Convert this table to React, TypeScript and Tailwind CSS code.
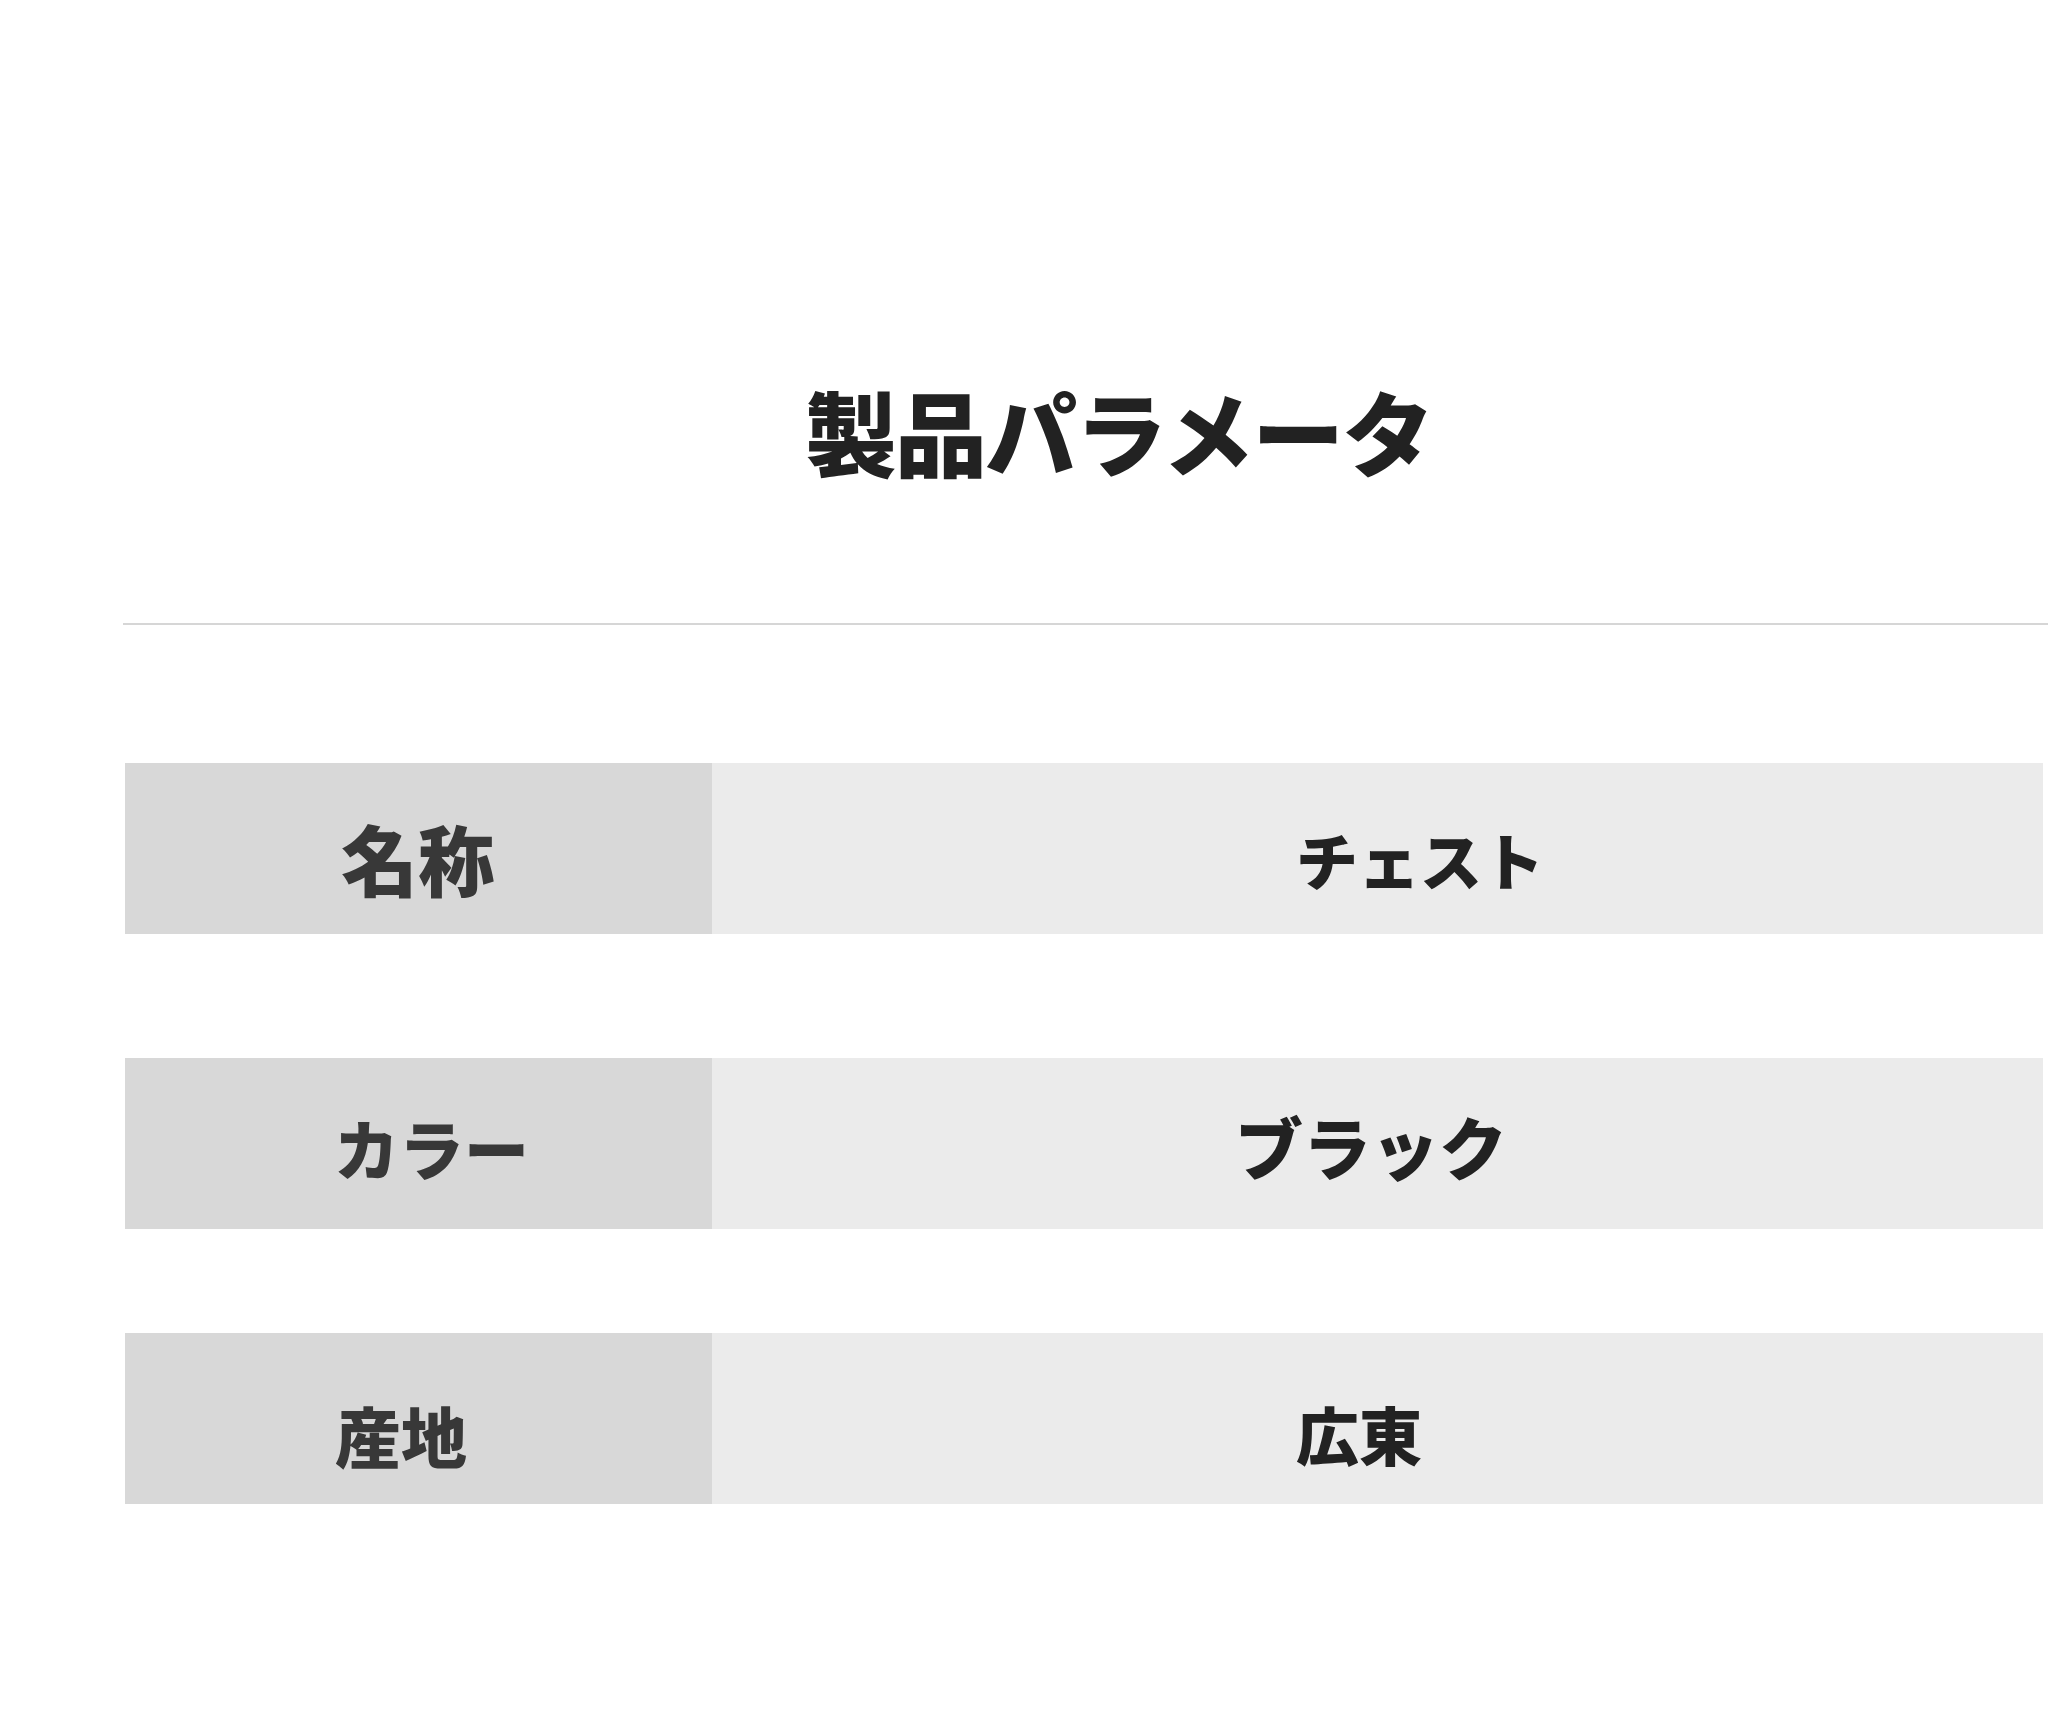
const rows = [
  { label: "名称", value: "チェスト", labelCls: "text-[77px] pt-[18px] pl-[216px]", valueCls: "text-[62px] pt-[20px] pl-[584px]", wrap: "mt-[138px]" },
  { label: "カラー", value: "ブラック", labelCls: "text-[65px] pt-[8px] pl-[209px]", valueCls: "text-[68px] pt-[4px] pl-[523px]", wrap: "mt-[124px]" },
  { label: "産地", value: "広東", labelCls: "text-[66px] pt-[30px] pl-[210px]", valueCls: "text-[63px] pt-[28px] pl-[584px]", wrap: "mt-[104px]" },
];

export default function App() {
  return (
    <div className="min-h-[1724px] bg-white" style={{ fontFamily: '"Noto Sans CJK JP", "Noto Sans", sans-serif' }}>
      {/* タイトル */}
      <div className="pt-[384px] pl-[805px]">
        <h1 className="text-[92px] font-black leading-none text-[#222222] tracking-[-2px]">製品パラメータ</h1>
      </div>
      <div className="mt-[147px] ml-[123px] h-[2px] bg-[#d6d6d6]" />

      {/* パラメータ表 */}
      <div className="ml-[125px] mr-[5px] flex flex-col">
        {rows.map((r) => (
          <div key={r.label} className={`flex h-[171px] ${r.wrap}`}>
            <div className="w-[587px] bg-[#d8d8d8] flex items-center">
              <span className={`font-black leading-none text-[#383838] ${r.labelCls}`}>{r.label}</span>
            </div>
            <div className="flex-1 bg-[#ebebeb] flex items-center">
              <span className={`font-black leading-none text-[#222222] ${r.valueCls}`}>{r.value}</span>
            </div>
          </div>
        ))}
      </div>
    </div>
  );
}
